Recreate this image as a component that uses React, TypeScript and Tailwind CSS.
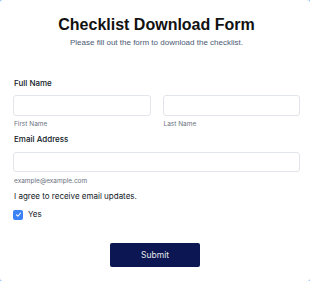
import React from "react";

export default function App() {
  return (
    <div className="w-[310px] h-[281px] bg-[#93c5fd]">
      <div
        className="h-full bg-white rounded-[3px] pl-[13px] pr-[10px] pt-[15px] flex flex-col"
        style={{ fontFamily: "Inter, 'Liberation Sans', sans-serif" }}
      >
        <h1
          className="text-center text-[16px] leading-[20px] font-bold text-[#111111]"
          style={{ fontFamily: "'Liberation Sans', Arial, sans-serif" }}
        >
          Checklist Download Form
        </h1>
        <p
          className="mt-[3px] text-center text-[8px] leading-[10px] text-[#4b5a74]"
          style={{ fontFamily: "'Liberation Sans', Arial, sans-serif" }}
        >
          Please fill out the form to download the checklist.
        </p>

        <label className="mt-[30px] pl-px text-[8px] leading-[11px] font-medium text-[#111827]">
          Full Name
        </label>
        <div className="mt-[6px] flex gap-[12px]">
          <div className="flex-1 flex flex-col">
            <input className="h-[21px] w-full rounded-[3px] border border-[#e2e5ea] bg-white outline-none" />
            <span className="mt-[4px] pl-px text-[6.5px] leading-[9px] text-[#6b7280]">First Name</span>
          </div>
          <div className="flex-1 flex flex-col">
            <input className="h-[21px] w-full rounded-[3px] border border-[#e2e5ea] bg-white outline-none" />
            <span className="mt-[4px] pl-px text-[6.5px] leading-[9px] text-[#6b7280]">Last Name</span>
          </div>
        </div>

        <label className="mt-[5px] pl-px text-[8px] leading-[11px] font-medium text-[#111827]">
          Email Address
        </label>
        <input className="mt-[7px] h-[20px] w-full rounded-[3px] border border-[#e2e5ea] bg-white outline-none" />
        <span className="mt-[5px] pl-px text-[6.5px] leading-[8px] text-[#6b7280]">example@example.com</span>

        <p className="mt-[6px] pl-px text-[8px] leading-[11px] text-[#111827]">
          I agree to receive email updates.
        </p>
        <div className="mt-[7px] flex items-center gap-[5px]">
          <span className="w-[10px] h-[10px] rounded-[2px] bg-[#3b82f6] flex items-center justify-center">
            <svg width="7" height="7" viewBox="0 0 12 12" fill="none">
              <path d="M2.5 6.5 L5 9 L9.5 3.5" stroke="white" strokeWidth="1.8" strokeLinecap="round" strokeLinejoin="round" />
            </svg>
          </span>
          <span className="text-[8px] leading-[11px] text-[#111827]">Yes</span>
        </div>

        <div className="mt-[23px] flex justify-center pr-[3px]">
          <button className="w-[90px] h-[24px] rounded-[2px] bg-[#0b1652] text-[#e5e7eb] text-[8.5px] font-normal">
            Submit
          </button>
        </div>
      </div>
    </div>
  );
}
